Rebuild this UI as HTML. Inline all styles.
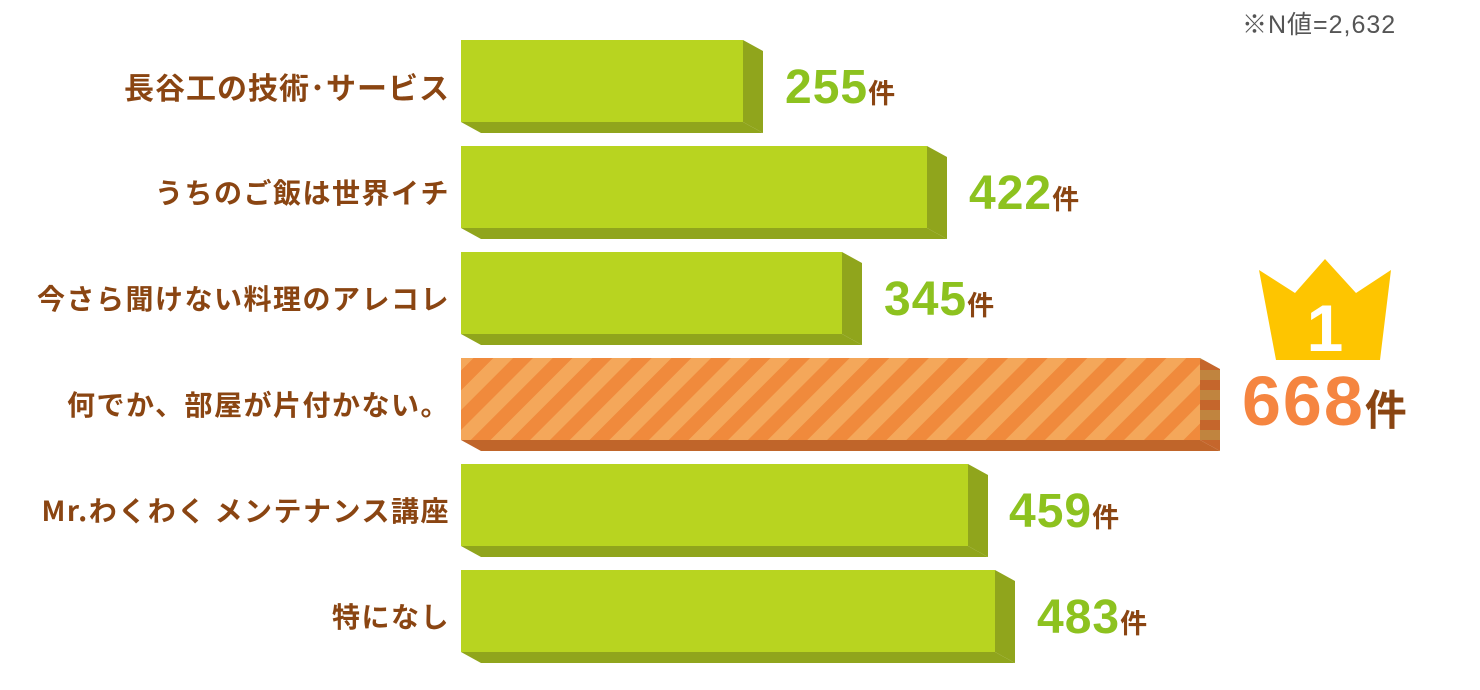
<!DOCTYPE html>
<html><head><meta charset="utf-8"><style>
body{margin:0;width:1480px;height:690px;background:#fff;position:relative;overflow:hidden;font-family:"Liberation Sans","Noto Sans CJK JP",sans-serif}
.lab{position:absolute;right:1030px;font-family:"Noto Sans CJK JP",sans-serif;font-weight:700;font-size:28px;color:#8a4512;white-space:nowrap;letter-spacing:1.5px;line-height:32px}
.val{position:absolute;font-weight:700;font-size:48px;color:#8dc21f;white-space:nowrap;line-height:50px;letter-spacing:1px}
.val span{font-family:"Noto Sans CJK JP",sans-serif;font-size:27px;color:#8a4512;letter-spacing:0}
</style></head><body>
<div style="position:absolute;left:1242px;top:5px;font-size:25px;letter-spacing:1px;color:#555;font-family:'Liberation Sans','Noto Sans CJK JP',sans-serif">※N値=2,632</div>
<svg width="1480" height="690" style="position:absolute;left:0;top:0">
<defs>
<pattern id="st" patternUnits="userSpaceOnUse" width="28" height="28" patternTransform="rotate(45)">
<rect width="28" height="28" fill="#f4a75a"/><rect width="14" height="28" fill="#f08a3c"/></pattern>
<pattern id="ss" patternUnits="userSpaceOnUse" width="20" height="20">
<rect width="20" height="20" fill="#c0843f"/><rect width="20" height="10" fill="#c5662c"/></pattern>
</defs>
<rect x="461" y="40" width="282" height="82" fill="#b8d420"/><polygon points="743,40 763,51 763,133 743,122" fill="#90a51c"/><polygon points="461,122 743,122 763,133 481,133" fill="#90a51c"/>
<rect x="461" y="146" width="466" height="82" fill="#b8d420"/><polygon points="927,146 947,157 947,239 927,228" fill="#90a51c"/><polygon points="461,228 927,228 947,239 481,239" fill="#90a51c"/>
<rect x="461" y="252" width="381" height="82" fill="#b8d420"/><polygon points="842,252 862,263 862,345 842,334" fill="#90a51c"/><polygon points="461,334 842,334 862,345 481,345" fill="#90a51c"/>
<rect x="461" y="358" width="739" height="82" fill="url(#st)"/><polygon points="1200,358 1220,369 1220,451 1200,440" fill="url(#ss)"/><polygon points="461,440 1200,440 1220,451 481,451" fill="#c0652a"/>
<rect x="461" y="464" width="507" height="82" fill="#b8d420"/><polygon points="968,464 988,475 988,557 968,546" fill="#90a51c"/><polygon points="461,546 968,546 988,557 481,557" fill="#90a51c"/>
<rect x="461" y="570" width="534" height="82" fill="#b8d420"/><polygon points="995,570 1015,581 1015,663 995,652" fill="#90a51c"/><polygon points="461,652 995,652 1015,663 481,663" fill="#90a51c"/>
<polygon points="1259,270 1295,293 1325,259 1356,293 1391,270 1380,360 1276,360" fill="#fec500"/>
<text x="1325" y="351" text-anchor="middle" font-family="Liberation Sans" font-weight="700" font-size="66" fill="#fff">1</text>
</svg>
<div class="lab" style="top:70px;font-size:30px;letter-spacing:1px">長谷工の技術･サービス</div>
<div class="lab" style="top:176px">うちのご飯は世界イチ</div>
<div class="lab" style="top:282px">今さら聞けない料理のアレコレ</div>
<div class="lab" style="top:388px">何でか、部屋が片付かない。</div>
<div class="lab" style="top:494px">Mr.わくわく メンテナンス講座</div>
<div class="lab" style="top:600px">特になし</div>
<div class="val" style="left:785px;top:63px">255<span>件</span></div>
<div class="val" style="left:969px;top:169px">422<span>件</span></div>
<div class="val" style="left:884px;top:275px">345<span>件</span></div>
<div class="val" style="left:1242px;top:366px;font-size:70px;line-height:70px;letter-spacing:2px;color:#f58540">668<span style="font-size:42px">件</span></div>
<div class="val" style="left:1009px;top:487px">459<span>件</span></div>
<div class="val" style="left:1037px;top:593px">483<span>件</span></div>
</body></html>
